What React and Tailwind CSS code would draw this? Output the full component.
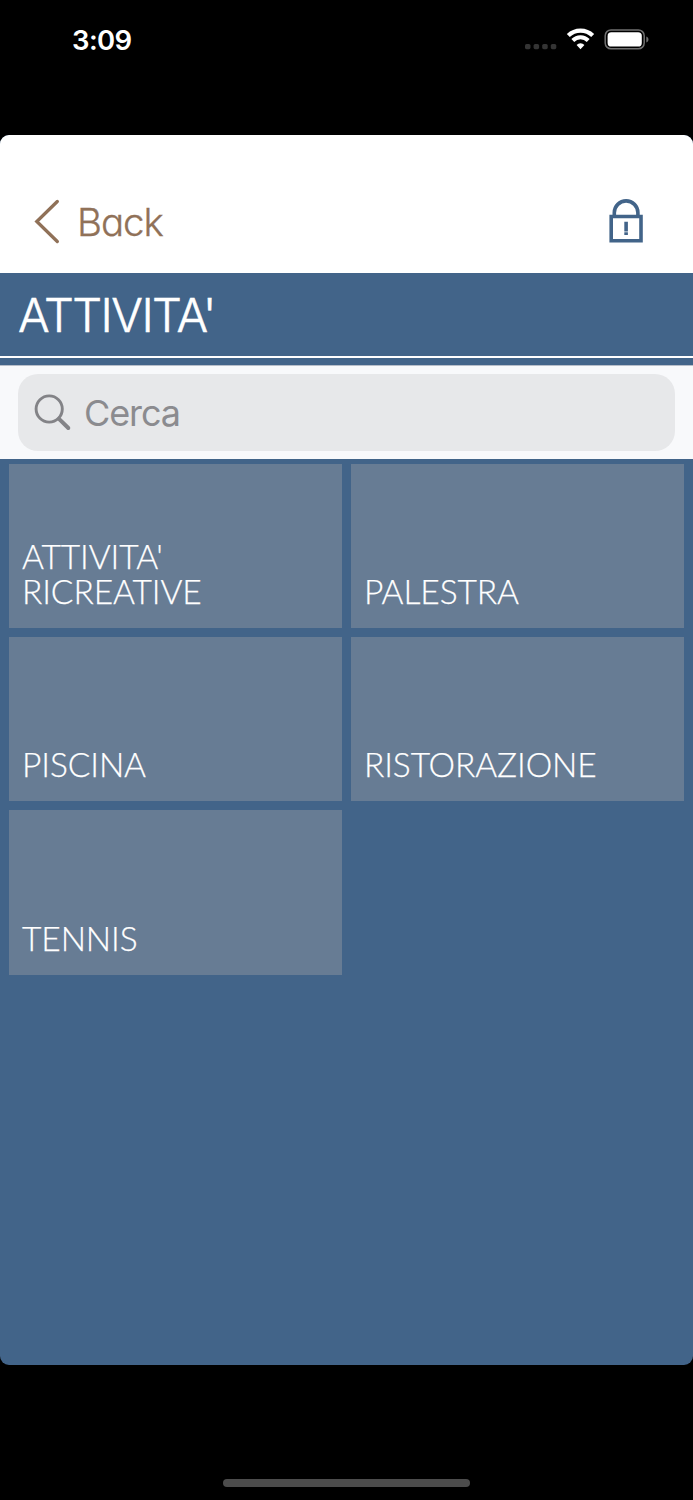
const ACTIVITIES = ["ATTIVITA' RICREATIVE", 'PALESTRA', 'PISCINA', 'RISTORAZIONE', 'TENNIS'];

function StatusBar() {
  return (
    <div className="flex h-[134px] shrink-0 items-start justify-between pt-[22px] pr-[44px] pl-[72px]">
      <span className="text-[27.5px] leading-[36px] font-semibold tracking-[-0.6px] text-white">3:09</span>
      <svg className="mt-[5px]" width="125" height="26" viewBox="0 0 125 26" fill="none">
        {/* no signal */}
        <g fill="#343434">
          <rect x="1" y="17" width="5.5" height="5.2" rx="1.6" />
          <rect x="9.6" y="17" width="5.5" height="5.2" rx="1.6" />
          <rect x="18.2" y="17" width="5.5" height="5.2" rx="1.6" />
          <rect x="26.8" y="17" width="5.5" height="5.2" rx="1.6" />
        </g>
        {/* wifi */}
        <path d="M44.3 8.6a17.5 17.5 0 0 1 24.4 0" stroke="#fff" strokeWidth="4.2" />
        <path d="M48.8 13.5a10.8 10.8 0 0 1 15.4 0" stroke="#fff" strokeWidth="4" />
        <path d="M52.6 18a5.4 5.4 0 0 1 7.8 0l-3.9 4.2z" fill="#fff" />
        {/* battery */}
        <rect x="81.2" y="2.9" width="39" height="18.9" rx="5.8" stroke="#707070" strokeWidth="1.5" />
        <rect x="83.6" y="5.2" width="34.2" height="14.4" rx="3.7" fill="#fff" />
        <path d="M122.3 9.6c2.9 1 2.9 5 0 6z" fill="#707070" />
      </svg>
    </div>
  );
}

function NavBar() {
  return (
    <div className="flex h-[138.5px] shrink-0 items-start justify-between bg-white pt-[63px] pr-[50px] pl-[34px]">
      <button className="flex items-start text-[#907158]">
        <svg width="27" height="46" viewBox="0 0 27 46" fill="none" stroke="currentColor" strokeWidth="3.3" strokeLinecap="round">
          <path d="M23.3 3.5 2.8 23.5l20.5 20" />
        </svg>
        <span className="ml-[16px] text-[38.5px] leading-[48px] font-light tracking-[-1.1px] [-webkit-text-stroke:0.3px_#907158] [font-feature-settings:'cv11']">Back</span>
      </button>
      <svg width="34" height="46" viewBox="0 0 34 46" fill="none" stroke="#426489" strokeWidth="3.6">
        <path d="M5.3 17.5v-2.8a11.8 11.8 0 0 1 23.6 0v2.8" />
        <path d="M2.2 18.5h29.8v24.3H2.2z" />
        <path d="M17.1 23.8v9.8M17.1 34.2v2.8" />
      </svg>
    </div>
  );
}

function SearchBar() {
  return (
    <div className="h-[94.5px] shrink-0 border-t border-[#b7bec9] bg-[#f8f9fb] px-[18px] pt-[8px]">
      <div className="flex h-[77px] items-center rounded-[20px] bg-[#e7e8ea] pl-[16px] text-[#8b8b8f]">
        <svg width="38" height="38" viewBox="0 0 38 38" fill="none" stroke="#838387" strokeLinecap="round">
          <circle cx="15.2" cy="16" r="13.1" strokeWidth="2.9" />
          <path d="m25 25.8 9.3 9.2" strokeWidth="4" />
        </svg>
        <span className="mt-[2px] ml-[12px] text-[36px] leading-[44px] tracking-[-1.1px]">Cerca</span>
      </div>
    </div>
  );
}

export default function App() {
  return (
    <div className="flex h-[1500px] w-[693px] flex-col overflow-hidden bg-black font-['Inter',sans-serif]">
      <StatusBar />
      <main className="mt-[0.5px] flex h-[1230px] shrink-0 flex-col overflow-hidden rounded-[9px] bg-[#426489]">
        <NavBar />
        <h1 className="h-[83px] shrink-0 pt-[12px] pl-[18px] text-[47px] leading-[60px] font-light tracking-[-1.6px] text-white [-webkit-text-stroke:0.5px_white]">ATTIVITA'</h1>
        <div className="mb-[6.5px] h-[2px] shrink-0 bg-white" />
        <SearchBar />
        <div className="grid grid-cols-2 gap-[9px] px-[9px] pt-[4.5px]">
          {ACTIVITIES.map((name) => (
            <div key={name} className="flex h-[164.4px] items-end bg-[#677c94] px-[13px] pb-[19px]">
              <span className="w-[240px] font-['Lato',sans-serif] text-[33.5px] leading-[35px] font-light tracking-[-0.1px] text-white [-webkit-text-stroke:0.25px_white]">{name}</span>
            </div>
          ))}
        </div>
      </main>
      <div className="mx-auto mt-[114px] h-[8px] w-[247px] rounded-full bg-[#4c4c4c]" />
    </div>
  );
}
